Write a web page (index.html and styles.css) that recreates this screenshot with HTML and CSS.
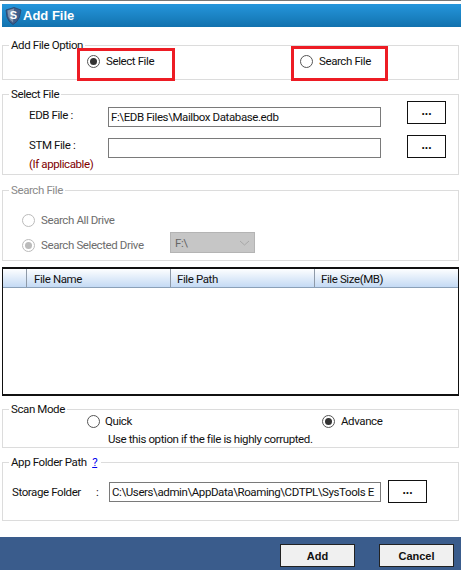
FILE: index.html
```html
<!DOCTYPE html>
<html lang="en">
<head>
  <meta charset="UTF-8">
  <meta name="viewport" content="width=device-width, initial-scale=1">
  <title>Add File</title>
  <link rel="stylesheet" href="styles.css">
</head>
<body>
<div class="window">
  <div class="titlebar">
    <svg class="logo" width="17" height="18" viewBox="0 0 17 18">
      <path d="M1 3 L9 0.500 L16 3 L14.500 10 Q12.500 15 8 17.500 Q3.500 15 2 10 Z" fill="#3f5f8c" stroke="#2c4468" stroke-width="0.800"/>
      <path d="M2.500 3.500 L9 1.500 L8 15.500 Q4.500 13 3.300 9.500 Z" fill="#8496ae"/>
      <text x="8.500" y="11.500" class="logo-s">S</text>
    </svg>
    <span>Add File</span>
  </div>

  <fieldset class="group option-group">
    <legend>Add File Option</legend>
    <div class="option-row">
      <label class="radio select-radio"><span class="dot on"></span>Select File</label>
      <label class="radio search-radio"><span class="dot"></span>Search File</label>
    </div>
  </fieldset>
  <div class="mark mark-select"></div>
  <div class="mark mark-search"></div>

  <fieldset class="group select-group">
    <legend>Select File</legend>
    <div class="file-row first">
      <span class="file-label">EDB File :</span>
      <input class="path" type="text" value="F:\EDB Files\Mailbox Database.edb">
      <button class="browse">...</button>
    </div>
    <div class="file-row second">
      <span class="file-label">STM File :<small>(If applicable)</small></span>
      <input class="path" type="text" value="">
      <button class="browse">...</button>
    </div>
  </fieldset>

  <fieldset class="group search-group">
    <legend>Search File</legend>
    <label class="radio off"><span class="dot"></span>Search All Drive</label>
    <div class="drive-row">
      <label class="radio off"><span class="dot on"></span>Search Selected Drive</label>
      <div class="drive-select">
        <span>F:\</span>
        <svg width="11" height="6" viewBox="0 0 11 6"><path d="M1 1 L5.500 5 L10 1" fill="none" stroke="#a8a8a8"/></svg>
      </div>
    </div>
  </fieldset>

  <div class="list">
    <div class="list-head">
      <div class="col col-check"></div>
      <div class="col col-name">File Name</div>
      <div class="col col-path">File Path</div>
      <div class="col col-size">File Size(MB)</div>
    </div>
  </div>

  <fieldset class="group scan-group">
    <legend>Scan Mode</legend>
    <div class="scan-row">
      <label class="radio quick-radio"><span class="dot"></span>Quick</label>
      <label class="radio"><span class="dot on"></span>Advance</label>
    </div>
    <p class="scan-note">Use this option if the file is highly corrupted.</p>
  </fieldset>

  <fieldset class="group folder-group">
    <legend>App Folder Path <a class="help" href="#">?</a></legend>
    <div class="folder-row">
      <span class="folder-label">Storage Folder</span>
      <span class="folder-colon">:</span>
      <input class="path folder-path" type="text" value="C:\Users\admin\AppData\Roaming\CDTPL\SysTools E">
      <button class="browse">...</button>
    </div>
  </fieldset>

  <div class="footer">
    <button class="action">Add</button>
    <button class="action">Cancel</button>
  </div>
</div>
</body>
</html>
```

FILE: styles.css
```css
html, body { margin: 0; padding: 0; background: #fff; }
body { font-family: Roboto, "Liberation Sans", Arial, sans-serif; font-size: 11.5px; letter-spacing: -0.4px; color: #111; }
.window { position: relative; width: 461px; height: 570px; overflow: hidden; border-top: 1px solid #777; box-sizing: border-box; }

.titlebar { display: flex; align-items: center; gap: 1px; height: 23px; margin: 3px 0 0 2px; padding-left: 3px; background: linear-gradient(#2596dc, #1272ae); color: #fff; font: bold 13px "Liberation Sans", Arial, sans-serif; letter-spacing: 0; }
.logo { flex: none; }
.logo-s { fill: #fff; font-family: "Liberation Sans", sans-serif; font-size: 11px; font-weight: bold; text-anchor: middle; }

.group { box-sizing: border-box; margin: 0 2px; padding: 0; min-width: 0; border: 1px solid #dcdcdc; }
.group legend { margin-left: 6px; padding: 0 2px; line-height: 14px; }

.option-group { height: 42px; margin-top: 11px; }
.option-row { display: flex; padding: 2px 0 0 84px; }
.select-radio { width: 213px; }

.mark { position: absolute; border: 3px solid #ed1c24; box-sizing: border-box; }
.mark-select { left: 77px; top: 47px; width: 98px; height: 33px; }
.mark-search { left: 291px; top: 45px; width: 97px; height: 35px; }

.radio { display: flex; align-items: center; gap: 6px; height: 14px; }
.dot { flex: none; box-sizing: border-box; width: 13px; height: 13px; border: 1px solid #555; border-radius: 50%; background: #fff; display: flex; align-items: center; justify-content: center; }
.dot.on::after { content: ""; width: 7px; height: 7px; border-radius: 50%; background: #333; }
.radio.off { color: #6d6d6d; }
.radio.off .dot { border-color: #bbb; }
.radio.off .dot.on::after { background: #bbb; }

.select-group { height: 88px; margin-top: 7px; }
.file-row { display: flex; align-items: flex-start; padding-left: 26px; }
.file-row.first { margin-bottom: 8px; }
.file-label { width: 79px; line-height: 14px; padding-top: 7px; flex: none; }
.file-label small { display: block; margin-top: 5px; font-size: 11.5px; color: #800000; }
.second .file-label { padding-top: 3px; }
.path { box-sizing: border-box; width: 273px; height: 20px; margin: 6px 26px 0 0; padding: 0 2px; border: 1px solid #7a7a7a; border-radius: 0; background: #fff; font: 11.5px Roboto, "Liberation Sans", Arial, sans-serif; letter-spacing: -0.4px; color: #111; outline: none; }
.second .path { margin-top: 3px; }
.browse { box-sizing: border-box; flex: none; width: 39px; height: 23px; padding: 0 0 4px; border: 1px solid #111; background: #fff; font: bold 12px "Liberation Sans", Arial, sans-serif; color: #111; }

.search-group { height: 78px; margin-top: 8px; color: #8a8a8a; padding: 16px 0 0 19px; }
.search-group legend { color: #8a8a8a; margin-left: -13px; }
.drive-row { display: flex; align-items: flex-start; margin-top: 5px; }
.drive-row .radio { width: 148px; margin-top: 6px; }
.drive-select { box-sizing: border-box; display: flex; align-items: center; justify-content: space-between; width: 85px; height: 21px; padding: 0 4px; background: #c6c6c6; border: 1px solid #b4b4b4; color: #666; }

.list { box-sizing: border-box; height: 129px; margin: 6px 2px 0; border: 2px solid #111; border-width: 2px 1px; }
.list-head { display: flex; height: 18px; background: linear-gradient(#fdfeff, #c4daf4); border-bottom: 1px solid #8aa0b8; }
.col { box-sizing: border-box; padding: 3px 0 0 6px; border-right: 1px solid #8e9aa8; }
.col-check { width: 24px; }
.col-name { width: 144px; padding-left: 7px; }
.col-path { width: 144px; }
.col-size { flex: 1; border-right: 0; }

.scan-group { height: 46px; margin-top: 6px; }
.scan-row { display: flex; padding-left: 84px; margin-top: -2px; }
.quick-radio { width: 235px; gap: 5px; }
.scan-note { margin: 4px 0 0 105px; line-height: 14px; }

.folder-group { height: 66px; margin-top: 7px; }
.folder-group legend { padding-right: 4px; }
.help { color: #0000ee; margin-left: 3px; }
.folder-row { display: flex; align-items: center; padding: 11px 0 0 9px; }
.folder-label { width: 84px; flex: none; }
.folder-colon { width: 13px; flex: none; }
.folder-path { width: 272px; margin: 0 7px 0 0; }

.footer { display: flex; justify-content: flex-end; gap: 24px; height: 33px; margin-top: 16px; padding: 7px 7px 0 0; box-sizing: border-box; background: #3a5c8c; }
.action { box-sizing: border-box; width: 75px; height: 23px; padding: 0; border: 1px solid #222; background: #f0f0f0; font: bold 11px "Liberation Sans", Arial, sans-serif; color: #111; }
```
